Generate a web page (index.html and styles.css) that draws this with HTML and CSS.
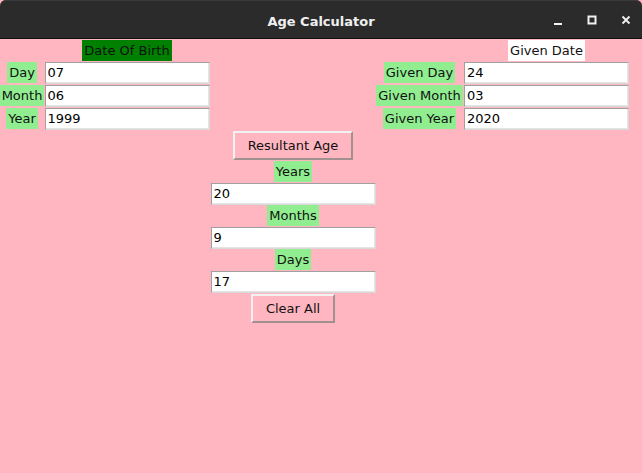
FILE: index.html
```html
<!DOCTYPE html>
<html>
<head>
<meta charset="utf-8">
<title>Age Calculator</title>
<link rel="stylesheet" href="styles.css">
</head>
<body>
<div class="window">
  <div class="titlebar">
    <div class="title">Age Calculator</div>
    <div class="controls">
      <svg class="ctl" width="12" height="12" viewBox="0 0 12 12"><rect x="2" y="9" width="8" height="2" fill="#f2f2f2"/></svg>
      <svg class="ctl" width="12" height="12" viewBox="0 0 12 12"><rect x="2.5" y="2.5" width="7" height="7" fill="none" stroke="#f2f2f2" stroke-width="2"/></svg>
      <svg class="ctl" width="12" height="12" viewBox="0 0 12 12"><path d="M2.5 2.5 L9.5 9.5 M9.5 2.5 L2.5 9.5" stroke="#f2f2f2" stroke-width="1.8" fill="none"/></svg>
    </div>
  </div>
  <div class="form">
    <div class="lbl dob r0 c1">Date Of Birth</div>
    <div class="lbl given r0 c4">Given Date</div>

    <div class="lbl green r1 c0">Day</div>
    <div class="entry r1 c1">07</div>
    <div class="lbl green r1 c3">Given Day</div>
    <div class="entry r1 c4">24</div>

    <div class="lbl green r2 c0">Month</div>
    <div class="entry r2 c1">06</div>
    <div class="lbl green r2 c3">Given Month</div>
    <div class="entry r2 c4">03</div>

    <div class="lbl green r3 c0">Year</div>
    <div class="entry r3 c1">1999</div>
    <div class="lbl green r3 c3">Given Year</div>
    <div class="entry r3 c4">2020</div>

    <div class="btn r4 c2">Resultant Age</div>
    <div class="lbl green r5 c2">Years</div>
    <div class="entry r6 c2">20</div>
    <div class="lbl green r7 c2">Months</div>
    <div class="entry r8 c2">9</div>
    <div class="lbl green r9 c2">Days</div>
    <div class="entry r10 c2">17</div>
    <div class="btn r11 c2">Clear All</div>
  </div>
</div>
</body>
</html>
```
FILE: styles.css
```css
html, body {
  margin: 0;
  padding: 0;
  background: #ffb6c1;
}
body {
  width: 642px;
  height: 473px;
  overflow: hidden;
  font-family: "DejaVu Sans", sans-serif;
}
.window {
  width: 642px;
  height: 473px;
  background: #ffb6c1;
}
.titlebar {
  height: 38px;
  background: #2b2b2b;
  border-bottom: 1px solid #111111;
  border-top-left-radius: 6px;
  border-top-right-radius: 6px;
  box-shadow: inset 0 1px 0 #3a3a3a;
  position: relative;
  display: flex;
  justify-content: center;
}
.title {
  color: #f0f0f0;
  font-family: "DejaVu Sans", sans-serif;
  font-weight: bold;
  font-size: 13px;
  line-height: 15px;
  padding-top: 14px;
}
.controls {
  position: absolute;
  right: 10px;
  top: 14px;
  display: flex;
  gap: 22px;
}
.ctl {
  display: block;
}
.form {
  display: grid;
  grid-template-columns: 44px 166px 166px 87px 167px;
  grid-template-rows: 22px 23px 23px 23px 31px 21px 23px 21px 23px 21px 23px 30px;
  justify-items: center;
  align-items: center;
}
.lbl {
  font-size: 13px;
  line-height: 17px;
  padding: 2px 2px;
  color: #111111;
  white-space: nowrap;
}
.green { background: #90ee90; }
.dob { background: #008000; }
.given { background: #ffffff; }
.entry {
  box-sizing: border-box;
  width: 165px;
  height: 22px;
  background: #ffffff;
  border: 1px solid;
  border-color: #a0a0a0 #d9d9d9 #d9d9d9 #a0a0a0;
  box-shadow: inset -1px -1px 0 #e4e4e4;
  font-size: 13px;
  line-height: 19px;
  padding-left: 2px;
  color: #000000;
}
.btn {
  box-sizing: border-box;
  height: 29px;
  padding: 0 13px;
  border: 2px solid;
  border-color: #f2f2f2 #a09090 #a09090 #f2f2f2;
  background: #ffb6c1;
  font-size: 13px;
  line-height: 25px;
  color: #111111;
}
.r0 { grid-row: 1; } .r1 { grid-row: 2; } .r2 { grid-row: 3; } .r3 { grid-row: 4; }
.r4 { grid-row: 5; } .r5 { grid-row: 6; } .r6 { grid-row: 7; } .r7 { grid-row: 8; }
.r8 { grid-row: 9; } .r9 { grid-row: 10; } .r10 { grid-row: 11; } .r11 { grid-row: 12; }
.c0 { grid-column: 1; } .c1 { grid-column: 2; } .c2 { grid-column: 3; }
.c3 { grid-column: 4; } .c4 { grid-column: 5; }
```
